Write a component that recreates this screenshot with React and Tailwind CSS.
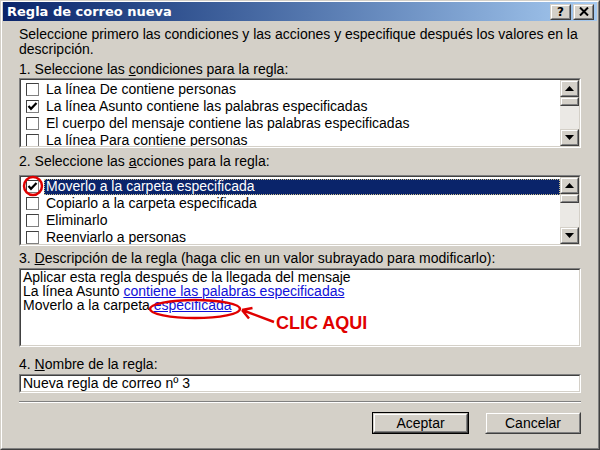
import React from "react";

const CONDITIONS = [
  { label: "La línea De contiene personas", checked: false },
  { label: "La línea Asunto contiene las palabras especificadas", checked: true },
  { label: "El cuerpo del mensaje contiene las palabras especificadas", checked: false },
  { label: "La línea Para contiene personas", checked: false },
];

const ACTIONS = [
  { label: "Moverlo a la carpeta especificada", checked: true, selected: true },
  { label: "Copiarlo a la carpeta especificada", checked: false },
  { label: "Eliminarlo", checked: false },
  { label: "Reenviarlo a personas", checked: false },
];

function Sunken({ className = "", innerClass = "", children }) {
  return (
    <div className={`border border-t-[#808080] border-l-[#808080] border-r-white border-b-white ${className}`}>
      <div className={`h-full border border-t-[#404040] border-l-[#404040] border-r-[#d4d0c8] border-b-[#d4d0c8] ${innerClass}`}>
        {children}
      </div>
    </div>
  );
}

function Raised({ className = "", innerClass = "", children }) {
  return (
    <div className={`border border-t-[#d4d0c8] border-l-[#d4d0c8] border-r-[#404040] border-b-[#404040] bg-[#d4d0c8] ${className}`}>
      <div className={`h-full border border-t-white border-l-white border-r-[#808080] border-b-[#808080] ${innerClass}`}>
        {children}
      </div>
    </div>
  );
}

function Check({ checked }) {
  return (
    <span className="w-[13px] h-[13px] shrink-0 border border-t-[#404040] border-l-[#404040] border-r-[#808080] border-b-[#808080] bg-white flex items-center justify-center">
      {checked && (
        <svg width="11" height="11" viewBox="0 0 11 11">
          <polyline points="1.5,5 4,7.8 9.5,2" fill="none" stroke="#000" strokeWidth="2.2" />
        </svg>
      )}
    </span>
  );
}

function Arrow({ down }) {
  return (
    <svg width="9" height="5" viewBox="0 0 9 5">
      <polygon points={down ? "0,0 9,0 4.5,5" : "0,5 9,5 4.5,0"} fill="#000" />
    </svg>
  );
}

function ScrollBar() {
  return (
    <div className="w-[19px] h-full flex flex-col bg-[#ebe9e5]">
      <Raised className="h-[17px]" innerClass="flex items-center justify-center">
        <Arrow />
      </Raised>
      <Raised className="h-[9px]" />
      <div className="flex-1" />
      <Raised className="h-[17px]" innerClass="flex items-center justify-center">
        <Arrow down />
      </Raised>
    </div>
  );
}

function CheckList({ items, pad, height }) {
  return (
    <Sunken className={height} innerClass="bg-white flex overflow-hidden">
      <div className={`flex-1 ${pad}`}>
        {items.map((it) => (
          <div key={it.label} className="flex items-center h-[17px] pl-[5px]">
            <Check checked={it.checked} />
            {it.selected ? (
              <span className="ml-[5px] flex-1 h-[16px] flex items-center px-[1px] bg-[#0a246a] text-white border border-dotted border-[#c8bd8a]">
                {it.label}
              </span>
            ) : (
              <span className="ml-[5px] px-[2px]">{it.label}</span>
            )}
          </div>
        ))}
      </div>
      <ScrollBar />
    </Sunken>
  );
}

export default function App() {
  return (
    <div className="relative w-[600px] h-[450px] overflow-hidden font-['Liberation_Sans',Arial,sans-serif] text-[14px] text-black">
      <div className="w-full h-full border border-t-[#d4d0c8] border-l-[#d4d0c8] border-r-[#404040] border-b-[#404040] bg-[#d4d0c8]">
        <div className="h-full border border-t-white border-l-white border-r-[#808080] border-b-[#808080] flex flex-col">
          {/* title bar */}
          <div className="h-[19px] mx-[1px] flex items-center pl-[4px] pr-[3px] bg-gradient-to-r from-[#0a246a] to-[#a6caf0]">
            <span className="flex-1 font-['DejaVu_Sans',sans-serif] font-bold text-[13px] text-white leading-none">
              Regla de correo nueva
            </span>
            <Raised className="w-[21px] h-[16px]" innerClass="flex items-center justify-center font-['DejaVu_Sans',sans-serif] font-bold text-[12px] leading-none">
              ?
            </Raised>
            <Raised className="ml-[2px] w-[21px] h-[16px]" innerClass="flex items-center justify-center">
              <svg width="10" height="9" viewBox="0 0 10 9">
                <path d="M1 0.5 L9 8.5 M9 0.5 L1 8.5" stroke="#000" strokeWidth="2" />
              </svg>
            </Raised>
          </div>

          <div className="flex-1 flex flex-col pl-[17px] pr-[17px]">
            <p className="mt-[6px] leading-[15px]">
              Seleccione primero las condiciones y las acciones y especifique después los valores en la descripción.
            </p>

            <div className="mt-[5px] leading-[15px]">
              1. Seleccione las <span className="underline">c</span>ondiciones para la regla:
            </div>
            <div className="mt-[1px]">
              <CheckList items={CONDITIONS} pad="pt-[1px]" height="h-[70px]" />
            </div>

            <div className="mt-[6px] leading-[15px]">
              2. Seleccione las <span className="underline">a</span>cciones para la regla:
            </div>
            <div className="mt-[6px]">
              <CheckList items={ACTIONS} pad="pt-[1px]" height="h-[71px]" />
            </div>

            <div className="mt-[5px] leading-[15px]">
              3. <span className="underline">D</span>escripción de la regla (haga clic en un valor subrayado para modificarlo):
            </div>
            <Sunken className="mt-[2px] h-[79px]" innerClass="bg-white pl-[2px] leading-[14px]">
              <div>Aplicar esta regla después de la llegada del mensaje</div>
              <div>
                La línea Asunto <span className="text-[#1010d8] underline">contiene las palabras especificadas</span>
              </div>
              <div>
                Moverlo a la carpeta <span className="text-[#1010d8] underline">especificada</span>
              </div>
            </Sunken>

            <div className="mt-[10px] leading-[15px]">
              4. <span className="underline">N</span>ombre de la regla:
            </div>
            <Sunken className="mt-[2px] h-[19px]" innerClass="bg-white pl-[2px] flex items-center">
              Nueva regla de correo nº 3
            </Sunken>

            <div className="mt-[8px] h-[2px] border-t border-t-[#808080] border-b border-b-white" />

            <div className="mt-[9px] flex justify-end gap-[16px]">
              <div className="border border-black">
                <Raised className="w-[95px] h-[20px]" innerClass="flex items-center justify-center">
                  Aceptar
                </Raised>
              </div>
              <Raised className="w-[96px] h-[22px]" innerClass="flex items-center justify-center">
                Cancelar
              </Raised>
            </div>
          </div>
        </div>
      </div>

      {/* red annotations drawn over the dialog */}
      <svg className="absolute inset-0 pointer-events-none" width="600" height="450" viewBox="0 0 600 450">
        <ellipse cx="33" cy="186" rx="9" ry="9" fill="none" stroke="#e00000" strokeWidth="2.5" />
        <ellipse cx="195" cy="309" rx="45" ry="9" fill="none" stroke="#e00000" strokeWidth="2.5" />
        <path d="M274 322 L242 310 M242 310 L249 318.5 M242 310 L252.5 308" fill="none" stroke="#e00000" strokeWidth="2.5" />
      </svg>
      <div className="absolute left-[276px] top-[314px] text-[18px] leading-[18px] font-bold text-[#e00000]">
        CLIC AQUI
      </div>
    </div>
  );
}
